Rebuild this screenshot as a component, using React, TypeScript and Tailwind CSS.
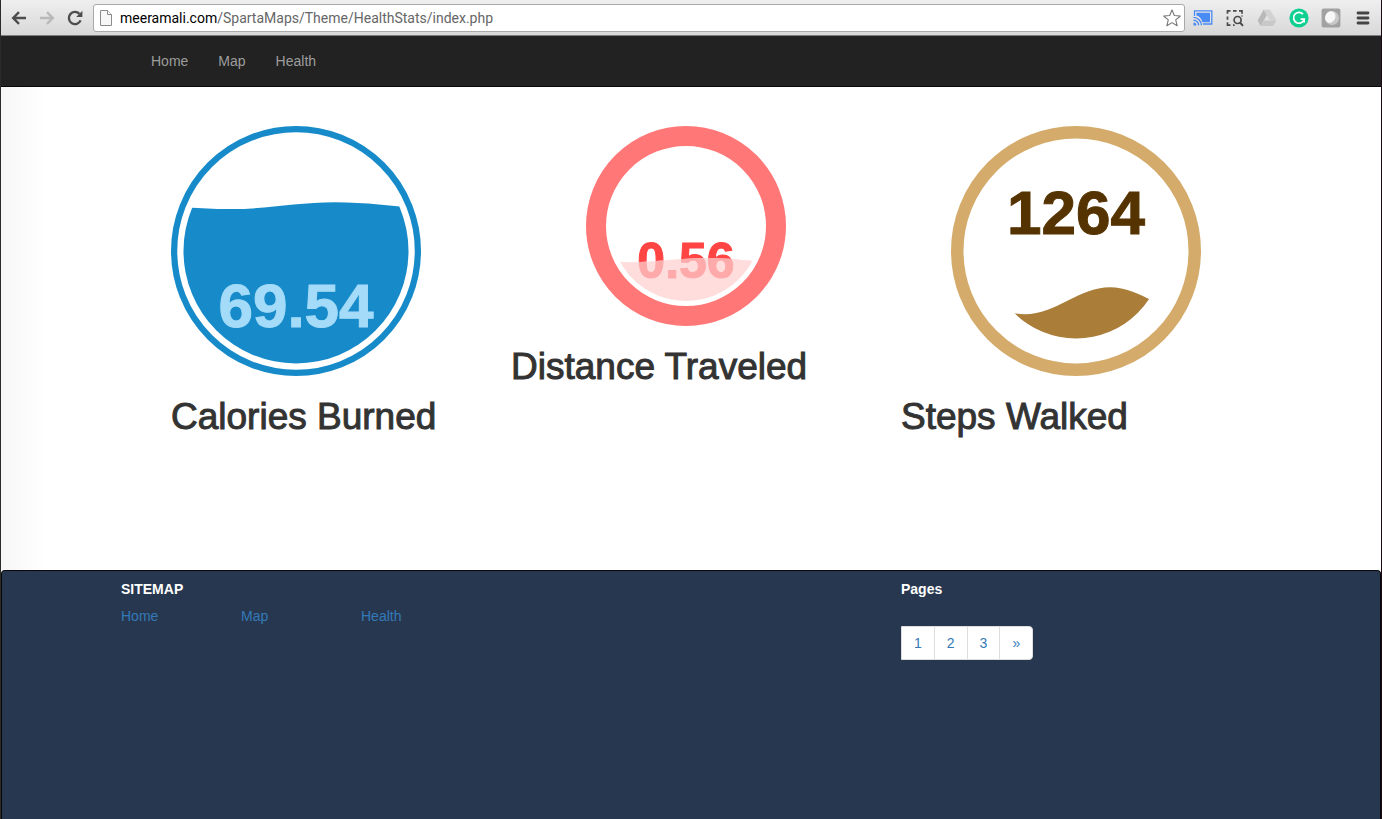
import React from "react";

type GaugeProps = {
  id: string;
  size: number;
  ring: number;
  fillRadius: number;
  wave: string;
  ringColor: string;
  waveColor: string;
  textColor: string;
  waveTextColor: string;
  value: string;
  baseline: number;
  textClass: string;
};

function Gauge(p: GaugeProps) {
  const c = p.size / 2;
  return (
    <svg
      className="mx-auto block"
      width={p.size}
      height={p.size}
      viewBox={`0 0 ${p.size} ${p.size}`}
      role="img"
      aria-label={p.value}
    >
      <defs>
        <clipPath id={p.id}>
          <path d={p.wave} />
        </clipPath>
      </defs>
      <circle cx={c} cy={c} r={c - p.ring / 2} fill="none" stroke={p.ringColor} strokeWidth={p.ring} />
      <text x={c} y={p.baseline} textAnchor="middle" fill={p.textColor} stroke={p.textColor} className={p.textClass}>
        {p.value}
      </text>
      <g clipPath={`url(#${p.id})`}>
        <circle cx={c} cy={c} r={p.fillRadius} fill={p.waveColor} />
        <text x={c} y={p.baseline} textAnchor="middle" fill={p.waveTextColor} stroke={p.waveTextColor} className={p.textClass} aria-hidden="true">
          {p.value}
        </text>
      </g>
    </svg>
  );
}

const headingClass =
  "mt-[21px] text-[37px] leading-10 font-normal whitespace-nowrap text-[#333] [-webkit-text-stroke:1px_#333]";

function Toolbar() {
  return (
    <header className="flex h-9 items-center border-b border-[#7d7d7d] bg-linear-to-b from-[#efefef] to-[#d8d8d8] pr-0.5 pl-1">
      <button type="button" aria-label="Back" className="flex w-7 justify-center">
        <svg width="16" height="16" viewBox="0 0 16 16" fill="none" stroke="#4d4d4d" strokeWidth="2.4">
          <path d="M15 8H3M8 2.2L2.2 8L8 13.8" />
        </svg>
      </button>
      <button type="button" aria-label="Forward" className="flex w-7 justify-center">
        <svg width="16" height="16" viewBox="0 0 16 16" fill="none" stroke="#b9b9b9" strokeWidth="2.4">
          <path d="M1 8H13M8 2.2L13.8 8L8 13.8" />
        </svg>
      </button>
      <button type="button" aria-label="Reload" className="flex w-7 justify-center">
        <svg width="16" height="16" viewBox="0 0 16 16">
          <path d="M13.6 10.4A6.1 6.1 0 1 1 12.4 3.8" fill="none" stroke="#4d4d4d" strokeWidth="2.4" />
          <path d="M15.4 0.8V7H9.2Z" fill="#4d4d4d" />
        </svg>
      </button>
      <div className="ml-1 flex h-7 min-w-0 flex-1 items-center rounded-[3px] border border-[#a9a9a9] bg-white pr-[3px] pl-1.5 font-[Roboto,sans-serif] text-sm">
        <svg className="mr-2 shrink-0" width="12" height="16" viewBox="0 0 12 16" fill="#f7f7f7" stroke="#8b8b8b">
          <path d="M.5 .5H7.5L11.5 4.5V15.5H.5Z" />
          <path d="M7.5 .5V4.5H11.5" fill="#fff" />
        </svg>
        <label htmlFor="address" className="text-black">
          meeramali.com
        </label>
        <input
          id="address"
          type="text"
          defaultValue="/SpartaMaps/Theme/HealthStats/index.php"
          className="min-w-0 flex-1 bg-transparent text-[#666] outline-none"
        />
        <button type="button" aria-label="Bookmark this page">
          <svg width="18" height="18" viewBox="0 0 18 18" fill="#fff" stroke="#777" strokeWidth="1.1" strokeLinejoin="round">
            <path d="M9 .9L11.3 6.5L17.3 7L12.7 10.9L14.2 16.8L9 13.6L3.8 16.8L5.3 10.9L.7 7L6.7 6.5Z" />
          </svg>
        </button>
      </div>
      <div className="flex items-center pl-0.5">
        <button type="button" aria-label="Cast" className="flex w-8 justify-center">
          <svg width="20" height="16" viewBox="0 0 20 16">
            <path d="M1.5 6V.9H18.8V14H10" fill="none" stroke="#4a8af4" strokeWidth="1.3" />
            <path d="M3.4 2.8H17V12.2H9.4C8.4 8.6 6.6 6.4 3.4 5.6Z" fill="#4a8af4" />
            <g fill="none" stroke="#4a8af4" strokeWidth="1.4">
              <path d="M.5 7.4A8 8 0 0 1 8.4 15.3M.5 10.2A5.2 5.2 0 0 1 5.6 15.3" />
            </g>
            <path d="M.5 12.4A3 3 0 0 1 3.4 15.4H.5Z" fill="#4a8af4" />
          </svg>
        </button>
        <button type="button" aria-label="Search selection" className="flex w-8 justify-center">
          <svg width="18" height="18" viewBox="0 0 18 18" fill="none" stroke="#4b4b4b" strokeWidth="1.7">
            <path d="M1.5 4.8V1.8H4.5M7 1.8H10.6M13 1.8H16V4.8M1.5 7.4V10.8M1.5 13.2V16.2H4.5M7 16.2H8.6M16 6.6V7.6" />
            <circle cx="11.6" cy="11" r="3.5" />
            <path d="M14 13.5L17 16.8" strokeWidth="2" />
          </svg>
        </button>
        <button type="button" aria-label="Drive" className="flex w-8 justify-center">
          <svg width="20" height="18" viewBox="0 0 20 18">
            <path d="M6.6 .8H13L19.4 11.6H13Z" fill="#d2d2d2" />
            <path d="M6.6 .8L9.8 6.2L3.6 17L.6 11.6Z" fill="#b9b9b9" />
            <path d="M6.9 11.6H19.4L16.2 17H3.6Z" fill="#c8c8c8" />
          </svg>
        </button>
        <button type="button" aria-label="Grammar check" className="flex w-8 justify-center">
          <svg width="20" height="20" viewBox="0 0 20 20">
            <circle cx="10" cy="10" r="9.6" fill="#0fd091" />
            <path d="M14 6.2A5.4 5.4 0 1 0 15.2 11.2H11.6M15.2 11.2V14.6" fill="none" stroke="#fff" strokeWidth="1.7" />
          </svg>
        </button>
        <button type="button" aria-label="Extension" className="flex w-8 justify-center">
          <svg width="20" height="20" viewBox="0 0 20 20">
            <rect x=".6" y=".6" width="18.8" height="18.8" rx="2" fill="#a2a2a2" />
            <circle cx="11" cy="10" r="7" fill="#c9c9c9" />
            <ellipse cx="9.3" cy="9" rx="5" ry="6" fill="#f8f8f8" transform="rotate(28 9.3 9)" />
          </svg>
        </button>
        <button type="button" aria-label="Menu" className="flex w-8 justify-center">
          <svg width="14" height="14" viewBox="0 0 14 14" stroke="#454545" strokeWidth="2.8" strokeLinecap="round">
            <path d="M2 2H12M2 7H12M2 12H12" />
          </svg>
        </button>
      </div>
    </header>
  );
}

const links = ["Home", "Map", "Health"];

export default function App() {
  return (
    <div className="flex min-h-screen flex-col border-r border-l border-r-[#1c0a12] border-l-[#2b2b2b] bg-white font-['Liberation_Sans',Arial,sans-serif] text-sm leading-5">
      <Toolbar />
      <nav className="border-b border-[#080808] bg-[#222]">
        <div className="mx-auto flex max-w-[1170px] px-[30px]">
          {links.map((l) => (
            <a key={l} href="#" className="px-[15px] py-[15px] text-[#9d9d9d] hover:text-white">
              {l}
            </a>
          ))}
        </div>
      </nav>

      <main className="bg-[linear-gradient(to_right,#f7f7f7,#fff_44px)] pt-[39px] pb-[133px]">
        <div className="mx-auto grid max-w-[1170px] grid-cols-3">
          <section className="px-[15px]">
            <div className="max-w-[350px]">
              <Gauge
                id="wave-calories"
                size={250}
                ring={6.25}
                fillRadius={112.5}
                wave="M-80 77C-30 77 20 83 61 83C98 83 127 76.3 164 76.3C204 76.3 236 83 276 83V250H-80Z"
                ringColor="#178bca"
                waveColor="#178bca"
                textColor="#045681"
                waveTextColor="#a4dbf8"
                value="69.54"
                baseline={201}
                textClass="text-[62px] font-bold"
              />
            </div>
            <h1 className={`${headingClass} pl-[50px]`}>Calories Burned</h1>
          </section>
          <section className="px-[15px]">
            <div className="max-w-[350px]">
              <Gauge
                id="wave-distance"
                size={200}
                ring={20}
                fillRadius={75}
                wave="M-30 132C0 132 20 136.2 44 136.2C72 136.2 93 132 121 132C149 132 170 136.2 198 136.2V200H-30Z"
                ringColor="#ff7777"
                waveColor="#ffdddd"
                textColor="#ff4444"
                waveTextColor="#ffaaaa"
                value="0.56"
                baseline={152}
                textClass="text-[50px] font-bold"
              />
            </div>
            <h1 className={headingClass}>Distance Traveled</h1>
          </section>
          <section className="px-[15px]">
            <div className="max-w-[350px]">
              <Gauge
                id="wave-steps"
                size={250}
                ring={12.5}
                fillRadius={87.5}
                wave="M-12 161C20 161 42 188.3 74 188.3C105 188.3 128 161.3 159 161.3C190 161.3 213 188.3 244 188.3V250H-12Z"
                ringColor="#d4ab6a"
                waveColor="#aa7d39"
                textColor="#553300"
                waveTextColor="#805615"
                value="1264"
                baseline={108}
                textClass="text-[62px] font-bold"
              />
            </div>
            <h1 className={headingClass}>Steps Walked</h1>
          </section>
        </div>
      </main>

      <footer className="flex-1 rounded-t border border-b-0 border-[#080808] bg-[#283750]">
        <div className="mx-auto grid max-w-[1170px] grid-cols-3 pt-2">
          <section className="col-span-2 px-[15px]">
            <h2 className="font-bold text-white">SITEMAP</h2>
            <ul className="mt-[7px] flex">
              {links.map((l) => (
                <li key={l} className="w-[120px]">
                  <a href="#" className="text-[#337ab7] hover:underline">
                    {l}
                  </a>
                </li>
              ))}
            </ul>
          </section>
          <section className="px-[15px]">
            <h2 className="font-bold text-white">Pages</h2>
            <ul className="mt-[27px] inline-flex overflow-hidden rounded-r border border-[#ddd] bg-white">
              {["1", "2", "3", "»"].map((l, i) => (
                <li key={l} className={i ? "border-l border-[#ddd]" : ""}>
                  <a href="#" className="block px-3 py-1.5 text-[#337ab7]">
                    {l}
                  </a>
                </li>
              ))}
            </ul>
          </section>
        </div>
      </footer>
    </div>
  );
}
